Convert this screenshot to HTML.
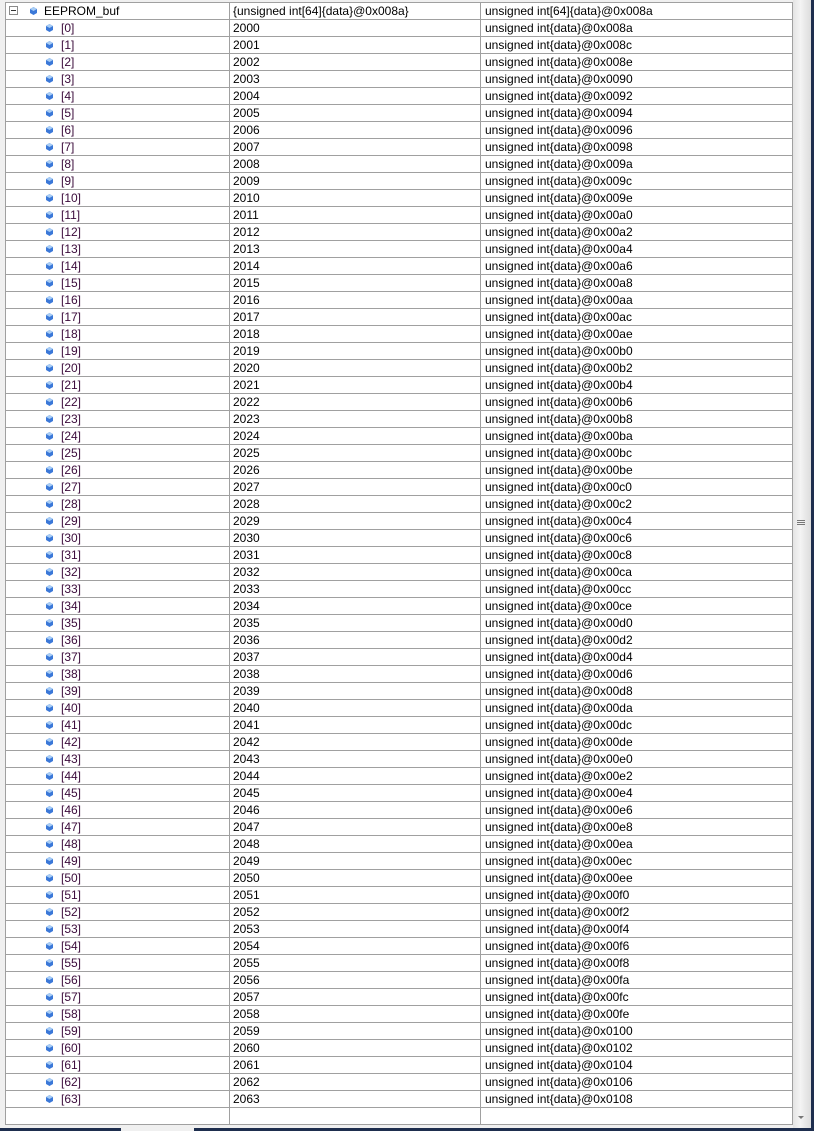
<!DOCTYPE html>
<html><head><meta charset="utf-8"><style>
html,body{margin:0;padding:0;width:814px;height:1131px;overflow:hidden;background:#f0f0f0;font-family:"Liberation Sans",sans-serif;font-size:12px;color:#000}
#grid{position:absolute;left:5px;top:2px;width:788px;height:1123px;background:#fff;border-top:1px solid #a0a0a0;border-left:1px solid #a0a0a0;box-sizing:border-box}
.r{height:17px;border-bottom:1px solid #a0a0a0;box-sizing:border-box;position:relative;line-height:16px;white-space:nowrap}
.r span{position:absolute;top:0}
.c2{left:227px}.c3{left:479px}
.n{left:55px;color:#3a0a3a}
.ic{position:absolute;left:40px;top:4px;width:7px;height:8px}
.vl{position:absolute;top:0;width:1px;height:1121px;background:#a0a0a0}
#sb{position:absolute;left:793px;top:0;width:18px;height:1128px;background:linear-gradient(90deg,#e4e4e4,#f4f4f4 40%,#dcdcdc)}
#bb{position:absolute;left:0;top:1128px;width:814px;height:3px;background:#1e2e4e}
#rb{position:absolute;left:811px;top:0;width:3px;height:1131px;background:#1e2e4e}
</style></head><body>
<div id="grid">
<div class="vl" style="left:223px"></div><div class="vl" style="left:474px"></div><div class="vl" style="left:786px"></div>
<div class="r"><svg style="position:absolute;left:3px;top:3px" width="9" height="9"><rect x="0.5" y="0.5" width="8" height="8" fill="#fff" stroke="#8a8a8a"/><line x1="2" y1="4.5" x2="7" y2="4.5" stroke="#333"/></svg><svg class="ic" style="left:24px" width="7" height="8"><path d="M3.5 0L7 2L7 6L3.5 8L0 6L0 2Z" fill="#3b78d8"/><path d="M3.5 0L7 2L3.5 4L0 2Z" fill="#a8cdf5"/></svg><span style="left:38px">EEPROM_buf</span><span class="c2">{unsigned int[64]{data}@0x008a}</span><span class="c3">unsigned int[64]{data}@0x008a</span></div>
<div class="r"><svg class="ic"><path d="M3.5 0L7 2L7 6L3.5 8L0 6L0 2Z" fill="#3b78d8"/><path d="M3.5 0L7 2L3.5 4L0 2Z" fill="#a8cdf5"/></svg><span class="n">[0]</span><span class="c2">2000</span><span class="c3">unsigned int{data}@0x008a</span></div>
<div class="r"><svg class="ic"><path d="M3.5 0L7 2L7 6L3.5 8L0 6L0 2Z" fill="#3b78d8"/><path d="M3.5 0L7 2L3.5 4L0 2Z" fill="#a8cdf5"/></svg><span class="n">[1]</span><span class="c2">2001</span><span class="c3">unsigned int{data}@0x008c</span></div>
<div class="r"><svg class="ic"><path d="M3.5 0L7 2L7 6L3.5 8L0 6L0 2Z" fill="#3b78d8"/><path d="M3.5 0L7 2L3.5 4L0 2Z" fill="#a8cdf5"/></svg><span class="n">[2]</span><span class="c2">2002</span><span class="c3">unsigned int{data}@0x008e</span></div>
<div class="r"><svg class="ic"><path d="M3.5 0L7 2L7 6L3.5 8L0 6L0 2Z" fill="#3b78d8"/><path d="M3.5 0L7 2L3.5 4L0 2Z" fill="#a8cdf5"/></svg><span class="n">[3]</span><span class="c2">2003</span><span class="c3">unsigned int{data}@0x0090</span></div>
<div class="r"><svg class="ic"><path d="M3.5 0L7 2L7 6L3.5 8L0 6L0 2Z" fill="#3b78d8"/><path d="M3.5 0L7 2L3.5 4L0 2Z" fill="#a8cdf5"/></svg><span class="n">[4]</span><span class="c2">2004</span><span class="c3">unsigned int{data}@0x0092</span></div>
<div class="r"><svg class="ic"><path d="M3.5 0L7 2L7 6L3.5 8L0 6L0 2Z" fill="#3b78d8"/><path d="M3.5 0L7 2L3.5 4L0 2Z" fill="#a8cdf5"/></svg><span class="n">[5]</span><span class="c2">2005</span><span class="c3">unsigned int{data}@0x0094</span></div>
<div class="r"><svg class="ic"><path d="M3.5 0L7 2L7 6L3.5 8L0 6L0 2Z" fill="#3b78d8"/><path d="M3.5 0L7 2L3.5 4L0 2Z" fill="#a8cdf5"/></svg><span class="n">[6]</span><span class="c2">2006</span><span class="c3">unsigned int{data}@0x0096</span></div>
<div class="r"><svg class="ic"><path d="M3.5 0L7 2L7 6L3.5 8L0 6L0 2Z" fill="#3b78d8"/><path d="M3.5 0L7 2L3.5 4L0 2Z" fill="#a8cdf5"/></svg><span class="n">[7]</span><span class="c2">2007</span><span class="c3">unsigned int{data}@0x0098</span></div>
<div class="r"><svg class="ic"><path d="M3.5 0L7 2L7 6L3.5 8L0 6L0 2Z" fill="#3b78d8"/><path d="M3.5 0L7 2L3.5 4L0 2Z" fill="#a8cdf5"/></svg><span class="n">[8]</span><span class="c2">2008</span><span class="c3">unsigned int{data}@0x009a</span></div>
<div class="r"><svg class="ic"><path d="M3.5 0L7 2L7 6L3.5 8L0 6L0 2Z" fill="#3b78d8"/><path d="M3.5 0L7 2L3.5 4L0 2Z" fill="#a8cdf5"/></svg><span class="n">[9]</span><span class="c2">2009</span><span class="c3">unsigned int{data}@0x009c</span></div>
<div class="r"><svg class="ic"><path d="M3.5 0L7 2L7 6L3.5 8L0 6L0 2Z" fill="#3b78d8"/><path d="M3.5 0L7 2L3.5 4L0 2Z" fill="#a8cdf5"/></svg><span class="n">[10]</span><span class="c2">2010</span><span class="c3">unsigned int{data}@0x009e</span></div>
<div class="r"><svg class="ic"><path d="M3.5 0L7 2L7 6L3.5 8L0 6L0 2Z" fill="#3b78d8"/><path d="M3.5 0L7 2L3.5 4L0 2Z" fill="#a8cdf5"/></svg><span class="n">[11]</span><span class="c2">2011</span><span class="c3">unsigned int{data}@0x00a0</span></div>
<div class="r"><svg class="ic"><path d="M3.5 0L7 2L7 6L3.5 8L0 6L0 2Z" fill="#3b78d8"/><path d="M3.5 0L7 2L3.5 4L0 2Z" fill="#a8cdf5"/></svg><span class="n">[12]</span><span class="c2">2012</span><span class="c3">unsigned int{data}@0x00a2</span></div>
<div class="r"><svg class="ic"><path d="M3.5 0L7 2L7 6L3.5 8L0 6L0 2Z" fill="#3b78d8"/><path d="M3.5 0L7 2L3.5 4L0 2Z" fill="#a8cdf5"/></svg><span class="n">[13]</span><span class="c2">2013</span><span class="c3">unsigned int{data}@0x00a4</span></div>
<div class="r"><svg class="ic"><path d="M3.5 0L7 2L7 6L3.5 8L0 6L0 2Z" fill="#3b78d8"/><path d="M3.5 0L7 2L3.5 4L0 2Z" fill="#a8cdf5"/></svg><span class="n">[14]</span><span class="c2">2014</span><span class="c3">unsigned int{data}@0x00a6</span></div>
<div class="r"><svg class="ic"><path d="M3.5 0L7 2L7 6L3.5 8L0 6L0 2Z" fill="#3b78d8"/><path d="M3.5 0L7 2L3.5 4L0 2Z" fill="#a8cdf5"/></svg><span class="n">[15]</span><span class="c2">2015</span><span class="c3">unsigned int{data}@0x00a8</span></div>
<div class="r"><svg class="ic"><path d="M3.5 0L7 2L7 6L3.5 8L0 6L0 2Z" fill="#3b78d8"/><path d="M3.5 0L7 2L3.5 4L0 2Z" fill="#a8cdf5"/></svg><span class="n">[16]</span><span class="c2">2016</span><span class="c3">unsigned int{data}@0x00aa</span></div>
<div class="r"><svg class="ic"><path d="M3.5 0L7 2L7 6L3.5 8L0 6L0 2Z" fill="#3b78d8"/><path d="M3.5 0L7 2L3.5 4L0 2Z" fill="#a8cdf5"/></svg><span class="n">[17]</span><span class="c2">2017</span><span class="c3">unsigned int{data}@0x00ac</span></div>
<div class="r"><svg class="ic"><path d="M3.5 0L7 2L7 6L3.5 8L0 6L0 2Z" fill="#3b78d8"/><path d="M3.5 0L7 2L3.5 4L0 2Z" fill="#a8cdf5"/></svg><span class="n">[18]</span><span class="c2">2018</span><span class="c3">unsigned int{data}@0x00ae</span></div>
<div class="r"><svg class="ic"><path d="M3.5 0L7 2L7 6L3.5 8L0 6L0 2Z" fill="#3b78d8"/><path d="M3.5 0L7 2L3.5 4L0 2Z" fill="#a8cdf5"/></svg><span class="n">[19]</span><span class="c2">2019</span><span class="c3">unsigned int{data}@0x00b0</span></div>
<div class="r"><svg class="ic"><path d="M3.5 0L7 2L7 6L3.5 8L0 6L0 2Z" fill="#3b78d8"/><path d="M3.5 0L7 2L3.5 4L0 2Z" fill="#a8cdf5"/></svg><span class="n">[20]</span><span class="c2">2020</span><span class="c3">unsigned int{data}@0x00b2</span></div>
<div class="r"><svg class="ic"><path d="M3.5 0L7 2L7 6L3.5 8L0 6L0 2Z" fill="#3b78d8"/><path d="M3.5 0L7 2L3.5 4L0 2Z" fill="#a8cdf5"/></svg><span class="n">[21]</span><span class="c2">2021</span><span class="c3">unsigned int{data}@0x00b4</span></div>
<div class="r"><svg class="ic"><path d="M3.5 0L7 2L7 6L3.5 8L0 6L0 2Z" fill="#3b78d8"/><path d="M3.5 0L7 2L3.5 4L0 2Z" fill="#a8cdf5"/></svg><span class="n">[22]</span><span class="c2">2022</span><span class="c3">unsigned int{data}@0x00b6</span></div>
<div class="r"><svg class="ic"><path d="M3.5 0L7 2L7 6L3.5 8L0 6L0 2Z" fill="#3b78d8"/><path d="M3.5 0L7 2L3.5 4L0 2Z" fill="#a8cdf5"/></svg><span class="n">[23]</span><span class="c2">2023</span><span class="c3">unsigned int{data}@0x00b8</span></div>
<div class="r"><svg class="ic"><path d="M3.5 0L7 2L7 6L3.5 8L0 6L0 2Z" fill="#3b78d8"/><path d="M3.5 0L7 2L3.5 4L0 2Z" fill="#a8cdf5"/></svg><span class="n">[24]</span><span class="c2">2024</span><span class="c3">unsigned int{data}@0x00ba</span></div>
<div class="r"><svg class="ic"><path d="M3.5 0L7 2L7 6L3.5 8L0 6L0 2Z" fill="#3b78d8"/><path d="M3.5 0L7 2L3.5 4L0 2Z" fill="#a8cdf5"/></svg><span class="n">[25]</span><span class="c2">2025</span><span class="c3">unsigned int{data}@0x00bc</span></div>
<div class="r"><svg class="ic"><path d="M3.5 0L7 2L7 6L3.5 8L0 6L0 2Z" fill="#3b78d8"/><path d="M3.5 0L7 2L3.5 4L0 2Z" fill="#a8cdf5"/></svg><span class="n">[26]</span><span class="c2">2026</span><span class="c3">unsigned int{data}@0x00be</span></div>
<div class="r"><svg class="ic"><path d="M3.5 0L7 2L7 6L3.5 8L0 6L0 2Z" fill="#3b78d8"/><path d="M3.5 0L7 2L3.5 4L0 2Z" fill="#a8cdf5"/></svg><span class="n">[27]</span><span class="c2">2027</span><span class="c3">unsigned int{data}@0x00c0</span></div>
<div class="r"><svg class="ic"><path d="M3.5 0L7 2L7 6L3.5 8L0 6L0 2Z" fill="#3b78d8"/><path d="M3.5 0L7 2L3.5 4L0 2Z" fill="#a8cdf5"/></svg><span class="n">[28]</span><span class="c2">2028</span><span class="c3">unsigned int{data}@0x00c2</span></div>
<div class="r"><svg class="ic"><path d="M3.5 0L7 2L7 6L3.5 8L0 6L0 2Z" fill="#3b78d8"/><path d="M3.5 0L7 2L3.5 4L0 2Z" fill="#a8cdf5"/></svg><span class="n">[29]</span><span class="c2">2029</span><span class="c3">unsigned int{data}@0x00c4</span></div>
<div class="r"><svg class="ic"><path d="M3.5 0L7 2L7 6L3.5 8L0 6L0 2Z" fill="#3b78d8"/><path d="M3.5 0L7 2L3.5 4L0 2Z" fill="#a8cdf5"/></svg><span class="n">[30]</span><span class="c2">2030</span><span class="c3">unsigned int{data}@0x00c6</span></div>
<div class="r"><svg class="ic"><path d="M3.5 0L7 2L7 6L3.5 8L0 6L0 2Z" fill="#3b78d8"/><path d="M3.5 0L7 2L3.5 4L0 2Z" fill="#a8cdf5"/></svg><span class="n">[31]</span><span class="c2">2031</span><span class="c3">unsigned int{data}@0x00c8</span></div>
<div class="r"><svg class="ic"><path d="M3.5 0L7 2L7 6L3.5 8L0 6L0 2Z" fill="#3b78d8"/><path d="M3.5 0L7 2L3.5 4L0 2Z" fill="#a8cdf5"/></svg><span class="n">[32]</span><span class="c2">2032</span><span class="c3">unsigned int{data}@0x00ca</span></div>
<div class="r"><svg class="ic"><path d="M3.5 0L7 2L7 6L3.5 8L0 6L0 2Z" fill="#3b78d8"/><path d="M3.5 0L7 2L3.5 4L0 2Z" fill="#a8cdf5"/></svg><span class="n">[33]</span><span class="c2">2033</span><span class="c3">unsigned int{data}@0x00cc</span></div>
<div class="r"><svg class="ic"><path d="M3.5 0L7 2L7 6L3.5 8L0 6L0 2Z" fill="#3b78d8"/><path d="M3.5 0L7 2L3.5 4L0 2Z" fill="#a8cdf5"/></svg><span class="n">[34]</span><span class="c2">2034</span><span class="c3">unsigned int{data}@0x00ce</span></div>
<div class="r"><svg class="ic"><path d="M3.5 0L7 2L7 6L3.5 8L0 6L0 2Z" fill="#3b78d8"/><path d="M3.5 0L7 2L3.5 4L0 2Z" fill="#a8cdf5"/></svg><span class="n">[35]</span><span class="c2">2035</span><span class="c3">unsigned int{data}@0x00d0</span></div>
<div class="r"><svg class="ic"><path d="M3.5 0L7 2L7 6L3.5 8L0 6L0 2Z" fill="#3b78d8"/><path d="M3.5 0L7 2L3.5 4L0 2Z" fill="#a8cdf5"/></svg><span class="n">[36]</span><span class="c2">2036</span><span class="c3">unsigned int{data}@0x00d2</span></div>
<div class="r"><svg class="ic"><path d="M3.5 0L7 2L7 6L3.5 8L0 6L0 2Z" fill="#3b78d8"/><path d="M3.5 0L7 2L3.5 4L0 2Z" fill="#a8cdf5"/></svg><span class="n">[37]</span><span class="c2">2037</span><span class="c3">unsigned int{data}@0x00d4</span></div>
<div class="r"><svg class="ic"><path d="M3.5 0L7 2L7 6L3.5 8L0 6L0 2Z" fill="#3b78d8"/><path d="M3.5 0L7 2L3.5 4L0 2Z" fill="#a8cdf5"/></svg><span class="n">[38]</span><span class="c2">2038</span><span class="c3">unsigned int{data}@0x00d6</span></div>
<div class="r"><svg class="ic"><path d="M3.5 0L7 2L7 6L3.5 8L0 6L0 2Z" fill="#3b78d8"/><path d="M3.5 0L7 2L3.5 4L0 2Z" fill="#a8cdf5"/></svg><span class="n">[39]</span><span class="c2">2039</span><span class="c3">unsigned int{data}@0x00d8</span></div>
<div class="r"><svg class="ic"><path d="M3.5 0L7 2L7 6L3.5 8L0 6L0 2Z" fill="#3b78d8"/><path d="M3.5 0L7 2L3.5 4L0 2Z" fill="#a8cdf5"/></svg><span class="n">[40]</span><span class="c2">2040</span><span class="c3">unsigned int{data}@0x00da</span></div>
<div class="r"><svg class="ic"><path d="M3.5 0L7 2L7 6L3.5 8L0 6L0 2Z" fill="#3b78d8"/><path d="M3.5 0L7 2L3.5 4L0 2Z" fill="#a8cdf5"/></svg><span class="n">[41]</span><span class="c2">2041</span><span class="c3">unsigned int{data}@0x00dc</span></div>
<div class="r"><svg class="ic"><path d="M3.5 0L7 2L7 6L3.5 8L0 6L0 2Z" fill="#3b78d8"/><path d="M3.5 0L7 2L3.5 4L0 2Z" fill="#a8cdf5"/></svg><span class="n">[42]</span><span class="c2">2042</span><span class="c3">unsigned int{data}@0x00de</span></div>
<div class="r"><svg class="ic"><path d="M3.5 0L7 2L7 6L3.5 8L0 6L0 2Z" fill="#3b78d8"/><path d="M3.5 0L7 2L3.5 4L0 2Z" fill="#a8cdf5"/></svg><span class="n">[43]</span><span class="c2">2043</span><span class="c3">unsigned int{data}@0x00e0</span></div>
<div class="r"><svg class="ic"><path d="M3.5 0L7 2L7 6L3.5 8L0 6L0 2Z" fill="#3b78d8"/><path d="M3.5 0L7 2L3.5 4L0 2Z" fill="#a8cdf5"/></svg><span class="n">[44]</span><span class="c2">2044</span><span class="c3">unsigned int{data}@0x00e2</span></div>
<div class="r"><svg class="ic"><path d="M3.5 0L7 2L7 6L3.5 8L0 6L0 2Z" fill="#3b78d8"/><path d="M3.5 0L7 2L3.5 4L0 2Z" fill="#a8cdf5"/></svg><span class="n">[45]</span><span class="c2">2045</span><span class="c3">unsigned int{data}@0x00e4</span></div>
<div class="r"><svg class="ic"><path d="M3.5 0L7 2L7 6L3.5 8L0 6L0 2Z" fill="#3b78d8"/><path d="M3.5 0L7 2L3.5 4L0 2Z" fill="#a8cdf5"/></svg><span class="n">[46]</span><span class="c2">2046</span><span class="c3">unsigned int{data}@0x00e6</span></div>
<div class="r"><svg class="ic"><path d="M3.5 0L7 2L7 6L3.5 8L0 6L0 2Z" fill="#3b78d8"/><path d="M3.5 0L7 2L3.5 4L0 2Z" fill="#a8cdf5"/></svg><span class="n">[47]</span><span class="c2">2047</span><span class="c3">unsigned int{data}@0x00e8</span></div>
<div class="r"><svg class="ic"><path d="M3.5 0L7 2L7 6L3.5 8L0 6L0 2Z" fill="#3b78d8"/><path d="M3.5 0L7 2L3.5 4L0 2Z" fill="#a8cdf5"/></svg><span class="n">[48]</span><span class="c2">2048</span><span class="c3">unsigned int{data}@0x00ea</span></div>
<div class="r"><svg class="ic"><path d="M3.5 0L7 2L7 6L3.5 8L0 6L0 2Z" fill="#3b78d8"/><path d="M3.5 0L7 2L3.5 4L0 2Z" fill="#a8cdf5"/></svg><span class="n">[49]</span><span class="c2">2049</span><span class="c3">unsigned int{data}@0x00ec</span></div>
<div class="r"><svg class="ic"><path d="M3.5 0L7 2L7 6L3.5 8L0 6L0 2Z" fill="#3b78d8"/><path d="M3.5 0L7 2L3.5 4L0 2Z" fill="#a8cdf5"/></svg><span class="n">[50]</span><span class="c2">2050</span><span class="c3">unsigned int{data}@0x00ee</span></div>
<div class="r"><svg class="ic"><path d="M3.5 0L7 2L7 6L3.5 8L0 6L0 2Z" fill="#3b78d8"/><path d="M3.5 0L7 2L3.5 4L0 2Z" fill="#a8cdf5"/></svg><span class="n">[51]</span><span class="c2">2051</span><span class="c3">unsigned int{data}@0x00f0</span></div>
<div class="r"><svg class="ic"><path d="M3.5 0L7 2L7 6L3.5 8L0 6L0 2Z" fill="#3b78d8"/><path d="M3.5 0L7 2L3.5 4L0 2Z" fill="#a8cdf5"/></svg><span class="n">[52]</span><span class="c2">2052</span><span class="c3">unsigned int{data}@0x00f2</span></div>
<div class="r"><svg class="ic"><path d="M3.5 0L7 2L7 6L3.5 8L0 6L0 2Z" fill="#3b78d8"/><path d="M3.5 0L7 2L3.5 4L0 2Z" fill="#a8cdf5"/></svg><span class="n">[53]</span><span class="c2">2053</span><span class="c3">unsigned int{data}@0x00f4</span></div>
<div class="r"><svg class="ic"><path d="M3.5 0L7 2L7 6L3.5 8L0 6L0 2Z" fill="#3b78d8"/><path d="M3.5 0L7 2L3.5 4L0 2Z" fill="#a8cdf5"/></svg><span class="n">[54]</span><span class="c2">2054</span><span class="c3">unsigned int{data}@0x00f6</span></div>
<div class="r"><svg class="ic"><path d="M3.5 0L7 2L7 6L3.5 8L0 6L0 2Z" fill="#3b78d8"/><path d="M3.5 0L7 2L3.5 4L0 2Z" fill="#a8cdf5"/></svg><span class="n">[55]</span><span class="c2">2055</span><span class="c3">unsigned int{data}@0x00f8</span></div>
<div class="r"><svg class="ic"><path d="M3.5 0L7 2L7 6L3.5 8L0 6L0 2Z" fill="#3b78d8"/><path d="M3.5 0L7 2L3.5 4L0 2Z" fill="#a8cdf5"/></svg><span class="n">[56]</span><span class="c2">2056</span><span class="c3">unsigned int{data}@0x00fa</span></div>
<div class="r"><svg class="ic"><path d="M3.5 0L7 2L7 6L3.5 8L0 6L0 2Z" fill="#3b78d8"/><path d="M3.5 0L7 2L3.5 4L0 2Z" fill="#a8cdf5"/></svg><span class="n">[57]</span><span class="c2">2057</span><span class="c3">unsigned int{data}@0x00fc</span></div>
<div class="r"><svg class="ic"><path d="M3.5 0L7 2L7 6L3.5 8L0 6L0 2Z" fill="#3b78d8"/><path d="M3.5 0L7 2L3.5 4L0 2Z" fill="#a8cdf5"/></svg><span class="n">[58]</span><span class="c2">2058</span><span class="c3">unsigned int{data}@0x00fe</span></div>
<div class="r"><svg class="ic"><path d="M3.5 0L7 2L7 6L3.5 8L0 6L0 2Z" fill="#3b78d8"/><path d="M3.5 0L7 2L3.5 4L0 2Z" fill="#a8cdf5"/></svg><span class="n">[59]</span><span class="c2">2059</span><span class="c3">unsigned int{data}@0x0100</span></div>
<div class="r"><svg class="ic"><path d="M3.5 0L7 2L7 6L3.5 8L0 6L0 2Z" fill="#3b78d8"/><path d="M3.5 0L7 2L3.5 4L0 2Z" fill="#a8cdf5"/></svg><span class="n">[60]</span><span class="c2">2060</span><span class="c3">unsigned int{data}@0x0102</span></div>
<div class="r"><svg class="ic"><path d="M3.5 0L7 2L7 6L3.5 8L0 6L0 2Z" fill="#3b78d8"/><path d="M3.5 0L7 2L3.5 4L0 2Z" fill="#a8cdf5"/></svg><span class="n">[61]</span><span class="c2">2061</span><span class="c3">unsigned int{data}@0x0104</span></div>
<div class="r"><svg class="ic"><path d="M3.5 0L7 2L7 6L3.5 8L0 6L0 2Z" fill="#3b78d8"/><path d="M3.5 0L7 2L3.5 4L0 2Z" fill="#a8cdf5"/></svg><span class="n">[62]</span><span class="c2">2062</span><span class="c3">unsigned int{data}@0x0106</span></div>
<div class="r"><svg class="ic"><path d="M3.5 0L7 2L7 6L3.5 8L0 6L0 2Z" fill="#3b78d8"/><path d="M3.5 0L7 2L3.5 4L0 2Z" fill="#a8cdf5"/></svg><span class="n">[63]</span><span class="c2">2063</span><span class="c3">unsigned int{data}@0x0108</span></div>
<div class="r"></div>
</div>
<div id="sb"><div style="position:absolute;left:4px;top:520px;width:8px;height:1px;background:#777;box-shadow:0 2px 0 #777,0 4px 0 #777"></div><div style="position:absolute;left:5px;top:1116px;width:0;height:0;border-left:3px solid transparent;border-right:3px solid transparent;border-top:3px solid #777"></div></div>
<div id="rb"></div>
<div id="bb"><div style="position:absolute;left:121px;top:0;width:73px;height:3px;background:#f0f0f0"></div></div>
</body></html>
